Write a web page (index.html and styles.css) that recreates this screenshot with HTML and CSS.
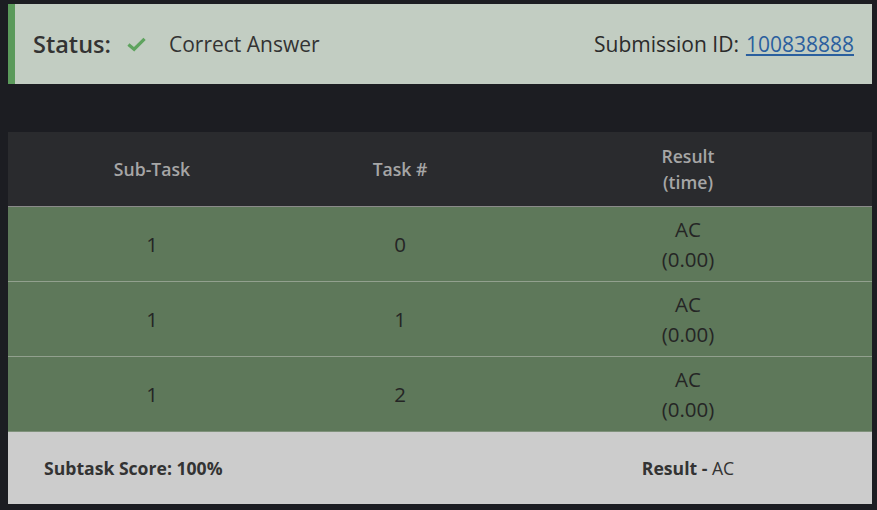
FILE: index.html
```html
<!DOCTYPE html>
<html>
<head>
<meta charset="utf-8">
<link rel="stylesheet" href="styles.css">
</head>
<body>
<div class="page">
  <div class="status">
    <div class="status-left">
      <span class="status-label">Status:</span>
      <svg class="check" viewBox="0 0 20 16" width="19" height="16"><path d="M1.5 8.5 L7.5 13.5 L18.5 2.5" fill="none" stroke="#5ea35e" stroke-width="3.4"/></svg>
      <span class="status-text">Correct Answer</span>
    </div>
    <div class="status-right">
      <span>Submission ID:</span>
      <a class="sub-link" href="#">100838888</a>
    </div>
  </div>
  <table class="results">
    <thead>
      <tr>
        <th class="c1">Sub-Task</th>
        <th class="c2">Task #</th>
        <th class="c3">Result<br>(time)</th>
      </tr>
    </thead>
    <tbody>
      <tr><td>1</td><td>0</td><td>AC<br>(0.00)</td></tr>
      <tr><td>1</td><td>1</td><td>AC<br>(0.00)</td></tr>
      <tr><td>1</td><td>2</td><td>AC<br>(0.00)</td></tr>
    </tbody>
    <tfoot>
      <tr>
        <td colspan="2" class="score">Subtask Score: 100%</td>
        <td class="final"><b>Result -</b> AC</td>
      </tr>
    </tfoot>
  </table>
</div>
</body>
</html>
```

FILE: styles.css
```css
html, body {
  margin: 0;
  padding: 0;
  background: #1c1d22;
  font-family: "Open Sans", "Liberation Sans", sans-serif;
}
.page {
  width: 864px;
  padding: 4px 0 0 8px;
}
.status {
  display: flex;
  align-items: center;
  justify-content: space-between;
  height: 80px;
  box-sizing: border-box;
  background: #c2cdc2;
  border-left: 7px solid #5b9a5b;
  padding: 0 18px 0 18px;
  color: #333;
}
.status-left {
  display: flex;
  align-items: center;
}
.status-label {
  font-size: 23.5px;
  font-weight: 600;
  color: #333;
}
.check {
  margin: 0 23px 0 16px;
}
.status-text {
  font-size: 21px;
  color: #333;
}
.status-right {
  font-size: 21px;
  color: #2b2b2b;
  display: flex;
  gap: 7px;
}
.sub-link {
  color: #2a5f9e;
  text-decoration: underline;
}
.results {
  margin-top: 48px;
  width: 864px;
  border-collapse: collapse;
  text-align: center;
}
.results th {
  background: #2a2b2e;
  color: #a6a6a6;
  font-size: 17.6px;
  font-weight: 600;
  line-height: 26px;
  height: 74px;
  padding: 0;
  border-bottom: 1px solid #8a8a8a;
}
.c1 { width: 288px; }
.c2 { width: 208px; }
.c3 { width: 368px; }
.results tbody td {
  background: #5e785a;
  color: #252525;
  font-size: 20.5px;
  line-height: 30px;
  height: 74px;
  padding: 0;
  border-bottom: 1px solid #92a08e;
}
.results tbody tr:last-child td {
  border-bottom: 1px solid #7f917b;
}
.results tfoot td {
  background: #cccccc;
  color: #333;
  font-size: 17.6px;
  font-weight: 700;
  height: 72px;
  padding: 0;
}
.score {
  text-align: left;
  padding-left: 36px !important;
}
.final {
  font-weight: 400 !important;
}
.final b {
  font-weight: 700;
}
```
